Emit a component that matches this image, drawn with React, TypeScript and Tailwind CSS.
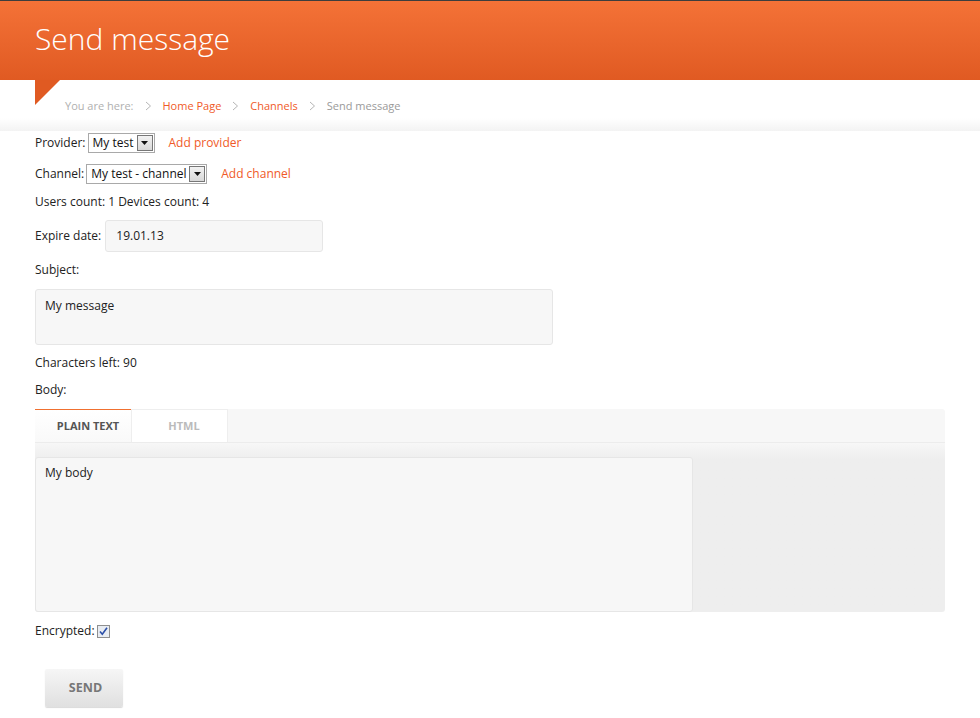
import React from "react";

const Chevron = () => (
    <svg width="7" height="10" viewBox="0 0 7 10" className="mx-[11px]">
        <polyline points="1,1 5.5,5 1,9" fill="none" stroke="#b5b5b5" strokeWidth="1" />
    </svg>
);

const FakeSelect = ({ value, width }: { value: string; width: string }) => (
    <div className={`flex h-5 items-center border border-[#a9a9a9] bg-white ${width}`}>
        <span className="flex-1 pl-[4px] text-[12px] leading-none text-[#111]">{value}</span>
        <span className="m-[1px] flex h-[16px] w-[16px] items-center justify-center border border-[#777] bg-gradient-to-b from-[#f2f2f2] to-[#d8d8d8]">
            <svg width="7" height="4" viewBox="0 0 7 4">
                <polygon points="0,0 7,0 3.5,4" fill="#111" />
            </svg>
        </span>
    </div>
);

export default function App() {
    return (
        <div className="min-h-[718px] bg-white font-['Open_Sans',sans-serif] text-[12px] text-[#222]">
            {/* Header */}
            <div className="h-px bg-[#3d3d3d]" />
            <div className="flex h-[79px] items-center bg-gradient-to-b from-[#f47237] to-[#e05a22] pl-[35px]">
                <h1 className="-mt-[4px] text-[30px] font-light leading-none text-white">Send message</h1>
            </div>

            {/* Breadcrumb */}
            <div className="relative flex h-[51px] items-start bg-gradient-to-b from-white from-75% to-[#f3f3f3] pl-[65px] pt-[19px]">
                <div className="absolute left-[35px] top-0 h-0 w-0 border-r-[25px] border-t-[25px] border-r-transparent border-t-[#e05a22]" />
                <nav className="flex items-center text-[11px] leading-[14px]">
                    <span className="text-[#b0b0b0]">You are here:</span>
                    <Chevron />
                    <a className="text-[#f05a28]">Home Page</a>
                    <Chevron />
                    <a className="text-[#f05a28]">Channels</a>
                    <Chevron />
                    <span className="text-[#9a9a9a]">Send message</span>
                </nav>
            </div>

            {/* Form */}
            <form className="px-[35px] pt-[2px]">
                <div className="flex h-5 items-center">
                    <span className="mr-[2px]">Provider:</span>
                    <FakeSelect value="My test" width="w-[67px]" />
                    <a className="ml-[14px] text-[#f05a28]">Add provider</a>
                </div>

                <div className="mt-[11px] flex h-5 items-center">
                    <span className="mr-[2px]">Channel:</span>
                    <FakeSelect value="My test - channel" width="w-[121px]" />
                    <a className="ml-[14px] text-[#f05a28]">Add channel</a>
                </div>

                <div className="mt-[9px] h-[18px] leading-[18px]">Users count: 1 Devices count: 4</div>

                <div className="mt-[9px] flex h-8 items-center">
                    <span className="mr-[4px]">Expire date:</span>
                    <div className="flex h-8 w-[218px] items-center rounded-[3px] border border-[#e6e6e6] bg-[#f7f7f7] pl-[10px]">
                        19.01.13
                    </div>
                </div>

                <div className="mt-[9px] h-[18px] leading-[18px]">Subject:</div>

                <div className="mt-[10px] h-[56px] w-[518px] rounded-[3px] border border-[#e6e6e6] bg-[#f7f7f7] pl-[9px] pt-[7px] leading-[18px]">
                    My message
                </div>

                <div className="mt-[9px] h-[18px] leading-[18px]">Characters left: 90</div>
                <div className="mt-[9px] h-[18px] leading-[18px]">Body:</div>

                {/* Tabs */}
                <div className="mt-[10px] w-[910px]">
                    <div className="flex h-[34px] rounded-tr-[3px] border-b border-[#ececec] bg-[#f7f7f7]">
                        <div className="flex w-[96px] items-center justify-center border-t border-[#f07030] bg-gradient-to-b from-white to-[#f9f9f9] pl-[10px] text-[11px] font-bold text-[#555]">
                            PLAIN TEXT
                        </div>
                        <div className="flex w-[97px] items-center justify-center border border-b-0 border-[#eeeeee] bg-white pl-[9px] text-[11px] font-bold text-[#bbbbbb]">
                            HTML
                        </div>
                    </div>
                    <div className="h-[169px] rounded-b-[3px] bg-gradient-to-b from-[#f7f7f7] to-[#eeeeee] to-[16px] pt-[14px]">
                        <div className="h-[155px] w-[658px] rounded-[3px] border border-[#e6e6e6] bg-[#f7f7f7] pl-[9px] pt-[6px] leading-[18px]">
                            My body
                        </div>
                    </div>
                </div>

                <div className="mt-[10px] flex h-[18px] items-center">
                    <span className="mr-[2px]">Encrypted:</span>
                    <svg width="13" height="13" viewBox="0 0 13 13">
                        <rect x="0.5" y="0.5" width="12" height="12" fill="#e8ecf2" stroke="#8f8f8f" />
                        <path d="M3 6.5 L5.3 9.2 L10 2.8" fill="none" stroke="#2b4fa8" strokeWidth="1.6" />
                    </svg>
                </div>

                <button
                    type="button"
                    className="ml-[10px] mt-[29px] h-[38px] w-[78px] rounded-[2px] bg-gradient-to-b from-[#f6f6f6] to-[#e0e0e0] pl-[3px] text-[12.5px] font-bold text-[#777] shadow-[0_1px_1px_rgba(0,0,0,0.15)]"
                >
                    SEND
                </button>
            </form>
        </div>
    );
}
